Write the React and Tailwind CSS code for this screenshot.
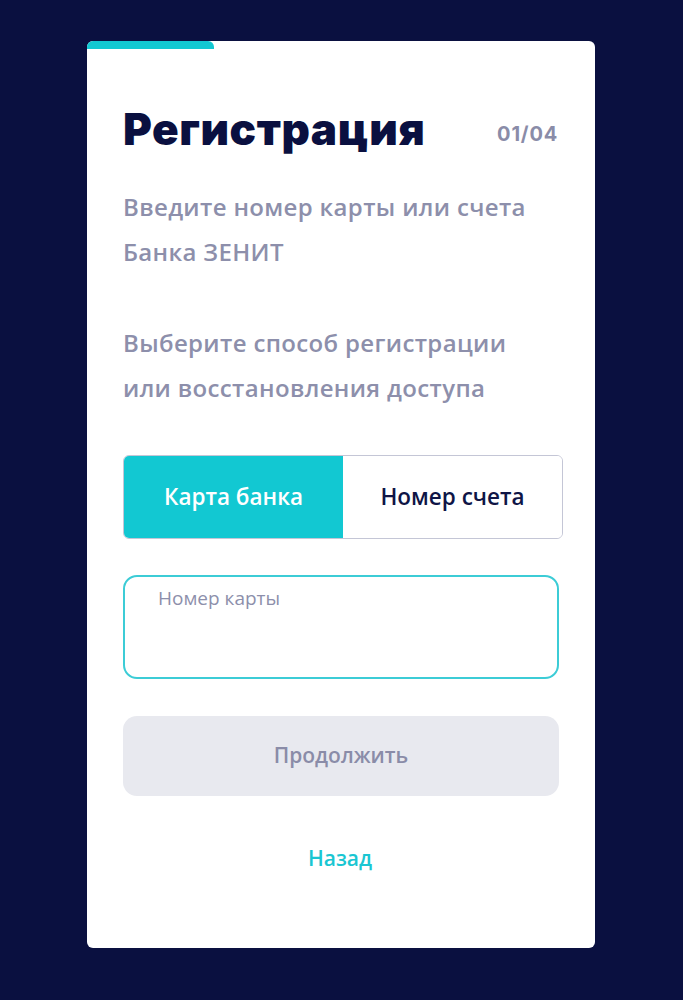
export default function App() {
  return (
    <div className="min-h-screen bg-[#0a1040] pt-[41px] pb-[51px] font-['Open_Sans',sans-serif]">
      <div className="ml-[87px] w-[508px] h-[907px] bg-white rounded-[6px] overflow-hidden flex flex-col">
        {/* progress */}
        <div className="h-[8px] w-[127px] bg-[#12c8d2] rounded-tr-[6px]"></div>

        <div className="px-[36px] pt-[56px] flex flex-col">
          {/* header */}
          <div className="flex items-end justify-between">
            <h1 className="font-['Inter',sans-serif] font-black text-[44px] leading-[48px] tracking-[0.6px] text-[#0a1040]">
              Регистрация
            </h1>
            <span className="font-['Inter',sans-serif] font-bold text-[20px] tracking-[0.8px] text-[#8a8ca8] mb-[4px] mr-[1px]">
              01/04
            </span>
          </div>

          <p className="mt-[31px] text-[24px] leading-[45px] font-semibold tracking-[0.35px] text-[#8d8fab]">
            Введите номер карты или счета
            <br />
            Банка ЗЕНИТ
          </p>

          <p className="mt-[46px] text-[24px] leading-[45px] font-semibold tracking-[0.35px] text-[#8d8fab]">
            Выберите способ регистрации
            <br />
            или восстановления доступа
          </p>

          {/* toggle */}
          <div className="mt-[45px] flex h-[84px] w-[440px] rounded-[6px] border border-[#c4c6d6] overflow-hidden">
            <button className="flex-1 bg-[#12c8d2] text-white text-[22.5px] font-semibold">
              Карта банка
            </button>
            <button className="flex-1 bg-white text-[#0f1546] text-[22.5px] font-semibold">
              Номер счета
            </button>
          </div>

          {/* input */}
          <div className="mt-[36px] h-[104px] w-[436px] rounded-[14px] border-2 border-[#3cccd6] px-[33px] pt-[7px]">
            <label className="block text-[19px] text-[#8d8fab]">Номер карты</label>
          </div>

          {/* continue */}
          <button className="mt-[37px] h-[80px] w-[436px] rounded-[14px] bg-[#e8e9ef] text-[21px] font-semibold text-[#8a8ca8]">
            Продолжить
          </button>

          <a className="mt-[47px] self-center text-[21px] font-semibold text-[#1ac6d2] ml-[-2px]">
            Назад
          </a>
        </div>
      </div>
    </div>
  );
}
